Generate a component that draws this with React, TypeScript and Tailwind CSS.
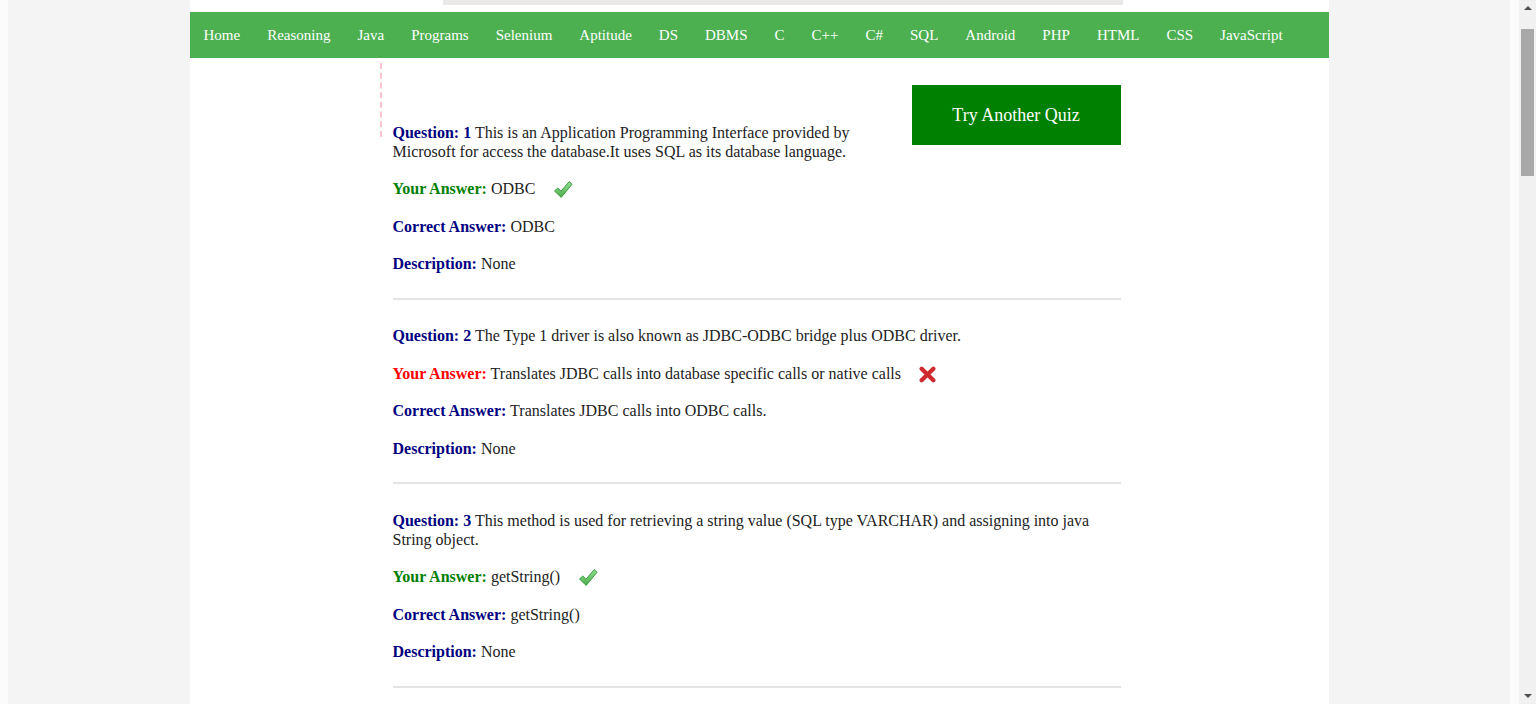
import React from 'react';

const navLinks = [
  'Home', 'Reasoning', 'Java', 'Programs', 'Selenium', 'Aptitude', 'DS', 'DBMS', 'C', 'C++',
  'C#', 'SQL', 'Android', 'PHP', 'HTML', 'CSS', 'JavaScript',
];

interface QuizItem {
  num: number;
  question: string;
  yourAnswer: string;
  correctAnswer: string;
  correct: boolean;
}

const results: QuizItem[] = [
  {
    num: 1,
    question: 'This is an Application Programming Interface provided by Microsoft for access the database.It uses SQL as its database language.',
    yourAnswer: 'ODBC',
    correctAnswer: 'ODBC',
    correct: true,
  },
  {
    num: 2,
    question: 'The Type 1 driver is also known as JDBC-ODBC bridge plus ODBC driver.',
    yourAnswer: 'Translates JDBC calls into database specific calls or native calls',
    correctAnswer: 'Translates JDBC calls into ODBC calls.',
    correct: false,
  },
  {
    num: 3,
    question: 'This method is used for retrieving a string value (SQL type VARCHAR) and assigning into java String object.',
    yourAnswer: 'getString()',
    correctAnswer: 'getString()',
    correct: true,
  },
];

const CheckIcon = () => (
  <svg width="20" height="20" viewBox="0 0 20 20" className="-my-[6px] inline-block align-middle">
    <defs>
      <linearGradient id="chk" x1="0" y1="0" x2="0" y2="1">
        <stop offset="0" stopColor="#92de92" />
        <stop offset="1" stopColor="#4cae4c" />
      </linearGradient>
    </defs>
    <path
      d="M1.5 11 L4.8 8 L8 11.2 L16.2 1.6 L19 4.3 L8.2 17.4 Z"
      fill="url(#chk)"
      stroke="#3f9b3f"
      strokeWidth="1"
      strokeLinejoin="round"
    />
  </svg>
);

const CrossIcon = () => (
  <svg width="17" height="17" viewBox="0 0 16 16" className="-my-[6px] inline-block align-middle">
    <path d="M2.5 2.5 L13.5 13.5 M13.5 2.5 L2.5 13.5" stroke="#cf2a2f" strokeWidth="4" strokeLinecap="round" />
  </svg>
);

const ResultBlock = ({ item }: { item: QuizItem }) => (
  <div>
    <p className="mb-[18.5px] leading-[19px]">
      <b className="text-[#000080]">Question: {item.num}</b> {item.question}
    </p>
    <p className="mb-[18.5px] leading-[19px]">
      <b className={item.correct ? 'text-[#008000]' : 'text-[#ff0000]'}>Your Answer:</b> {item.yourAnswer}
      <span className="ml-[18px]">{item.correct ? <CheckIcon /> : <CrossIcon />}</span>
    </p>
    <p className="mb-[18.5px] leading-[19px]">
      <b className="text-[#000080]">Correct Answer:</b> {item.correctAnswer}
    </p>
    <p className="mb-[18.5px] leading-[19px]">
      <b className="text-[#000080]">Description:</b> None
    </p>
    <div className="mt-[24.5px] mb-[26.5px] h-[2px] bg-[#e4e4e4]" />
  </div>
);

export default function App() {
  return (
    <div className="flex h-[704px] overflow-hidden bg-white font-['Liberation_Serif',serif] text-[16px] text-[#222]">
      <div className="w-[8px] shrink-0 bg-[#fbfbfb]" />
      <div className="flex-1 bg-[#f4f4f4]">
        <div className="mx-auto min-h-full w-[1139px] bg-white">
          <div className="h-[12px]">
            <div className="ml-[253px] h-[5px] w-[680px] bg-[#ebe8e8]" />
          </div>

          <nav className="flex h-[46px] items-center bg-[#4caf50] px-[0.5px]">
            {navLinks.map(link => (
              <a key={link} className="px-[13.5px] text-[15px] text-white">
                {link}
              </a>
            ))}
          </nav>

          <main className="relative pl-[203px] pr-[208px]">
            <div className="absolute left-[190px] top-[5px] h-[74px] border-l-2 border-dashed border-[#f7c4cd]" />
            <a className="float-right mt-[27px] flex h-[60px] w-[209px] items-center justify-center bg-[#008000] text-[18px] text-white">
              Try Another Quiz
            </a>
            <div className="h-[64.5px]" />
            {results.map(item => (
              <ResultBlock key={item.num} item={item} />
            ))}
          </main>
        </div>
      </div>
      <div className="w-[9px] shrink-0 bg-[#fbfbfb]" />
      <div className="flex w-[17px] shrink-0 flex-col items-center bg-[#f1f1f1]">
        <div className="mt-[6px] h-0 w-0 border-x-[4px] border-b-[4px] border-x-transparent border-b-[#505050]" />
        <div className="mt-[19px] h-[147px] w-[13px] bg-[#a8a8a8]" />
        <div className="flex-1" />
        <div className="mb-[6px] h-0 w-0 border-x-[4px] border-t-[4px] border-x-transparent border-t-[#505050]" />
      </div>
    </div>
  );
}
